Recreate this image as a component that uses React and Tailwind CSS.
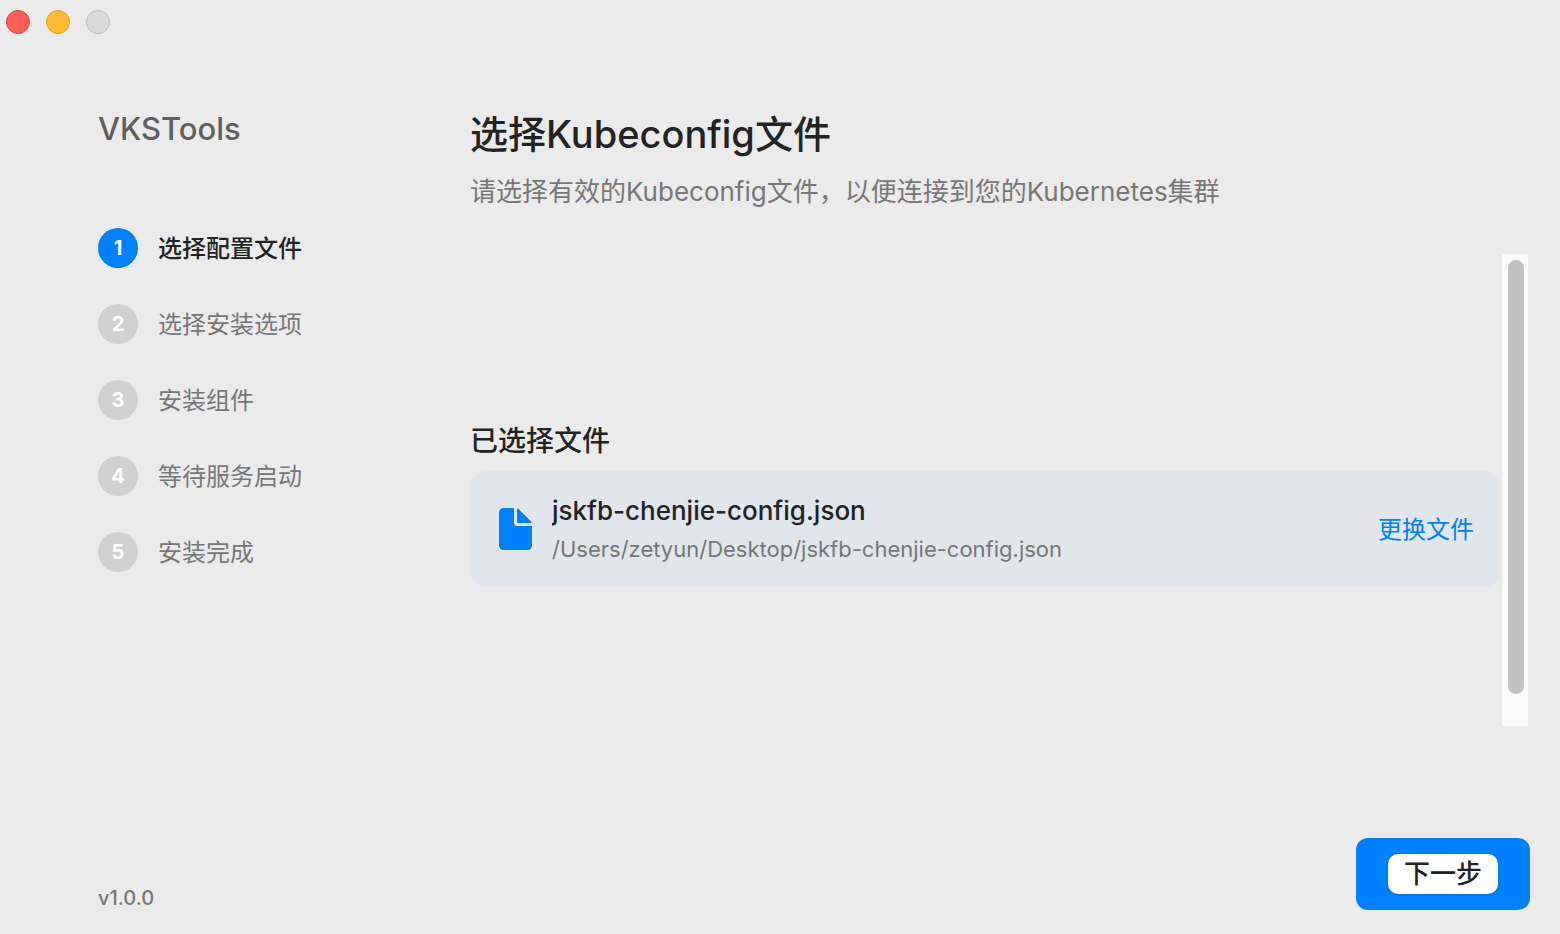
import React from 'react';
import clsx from 'clsx';

const steps = [
  { id: 1, label: '选择配置文件' },
  { id: 2, label: '选择安装选项' },
  { id: 3, label: '安装组件' },
  { id: 4, label: '等待服务启动' },
  { id: 5, label: '安装完成' },
];

const WindowControls = () => (
  <header className="flex gap-4 px-1.5 pt-2.5">
    <button
      type="button"
      aria-label="关闭"
      className="h-6 w-6 rounded-full border border-[#e0443e] bg-[#ff5f57]"
    />
    <button
      type="button"
      aria-label="最小化"
      className="h-6 w-6 rounded-full border border-[#dea02c] bg-[#febc2e]"
    />
    <button
      type="button"
      aria-label="缩放"
      disabled
      className="h-6 w-6 rounded-full border border-[#bcbcbc] bg-[#dadada]"
    />
  </header>
);

const Sidebar = ({ current }) => (
  <aside className="flex w-[470px] shrink-0 flex-col pb-5 pl-[98px]">
    <div className="pt-[75px] text-[31px] leading-10 font-medium text-[#5f5f5f]">
      VKSTools
    </div>

    <ol className="mt-[79px] flex flex-col gap-9">
      {steps.map((step) => {
        const active = step.id === current;
        return (
          <li key={step.id} className="flex items-center gap-5">
            <span
              className={clsx(
                'flex h-10 w-10 items-center justify-center rounded-full text-[20px] font-bold text-white',
                active ? 'bg-[#007fff]' : 'bg-[#d0d0d0]'
              )}
            >
              {step.id}
            </span>
            <span
              className={clsx(
                'pt-0.5 text-[24px] leading-8',
                active ? 'font-medium text-[#232323]' : 'text-[#777777]'
              )}
            >
              {step.label}
            </span>
          </li>
        );
      })}
    </ol>

    <div className="mt-auto text-[20px] leading-8 font-medium text-[#777777]">v1.0.0</div>
  </aside>
);

const FileIcon = () => (
  <svg viewBox="0 0 33 42" className="h-[42px] w-[33px] shrink-0" fill="#007fff" aria-hidden="true">
    <path d="M4.5 0H15V14.5a3.5 3.5 0 0 0 3.5 3.5H33V37.5a4.5 4.5 0 0 1-4.5 4.5H4.5A4.5 4.5 0 0 1 0 37.5V4.5A4.5 4.5 0 0 1 4.5 0Z" />
    <path d="M18 0.5Q19 0.6 20 1.6L31.6 13Q32.4 13.9 32.6 15H19a1 1 0 0 1-1-1Z" />
  </svg>
);

const SelectedFile = ({ name, path }) => (
  <div className="flex h-[116px] items-center rounded-2xl bg-[#e1e5ec] pr-[26px] pl-[29px]">
    <FileIcon />
    <div className="ml-5 min-w-0 flex-1">
      <div className="truncate text-[26px] leading-10 font-medium text-[#232323]">{name}</div>
      <div className="truncate text-[22px] leading-9 text-[#777777]">{path}</div>
    </div>
    <button type="button" className="pt-0.5 text-[24px] leading-8 text-[#007fff]">
      更换文件
    </button>
  </div>
);

const Scrollbar = () => (
  <div className="flex w-7 shrink-0 border-l-2 border-[#e7e7e7] bg-[#fafafa] pt-1.5 pb-8 pl-1.5">
    <div className="w-4 rounded-full bg-[#c2c2c2]" />
  </div>
);

export default function App() {
  return (
    <div className="flex min-h-screen flex-col bg-[#ebebeb] font-[Inter,'Noto_Sans_CJK_SC',sans-serif]">
      <WindowControls />

      <div className="flex flex-1">
        <Sidebar current={1} />

        <main className="flex min-w-0 flex-1 flex-col pt-[76px] pb-6">
          <h1 className="text-[38px] leading-12 font-medium text-[#232323]">
            选择Kubeconfig文件
          </h1>
          <p className="mt-[18px] text-[26px] leading-8 text-[#777777]">
            请选择有效的Kubeconfig文件，以便连接到您的Kubernetes集群
          </p>

          {/* 可滚动内容区 */}
          <div className="mt-[46px] mr-8 flex flex-1">
            <section className="min-w-0 flex-1 pt-[171px]">
              <h2 className="text-[28px] leading-8 font-medium text-[#232323]">已选择文件</h2>
              <div className="mt-3.5">
                <SelectedFile
                  name="jskfb-chenjie-config.json"
                  path="/Users/zetyun/Desktop/jskfb-chenjie-config.json"
                />
              </div>
            </section>
            <Scrollbar />
          </div>

          {/* 底部操作 */}
          <div className="mt-28 mr-[30px] flex justify-end">
            <button type="button" className="rounded-xl bg-[#007fff] px-8 py-4">
              <span className="block rounded-[10px] bg-white px-4 text-[26px] leading-10 font-medium text-[#232323] shadow-sm">
                下一步
              </span>
            </button>
          </div>
        </main>
      </div>
    </div>
  );
}
